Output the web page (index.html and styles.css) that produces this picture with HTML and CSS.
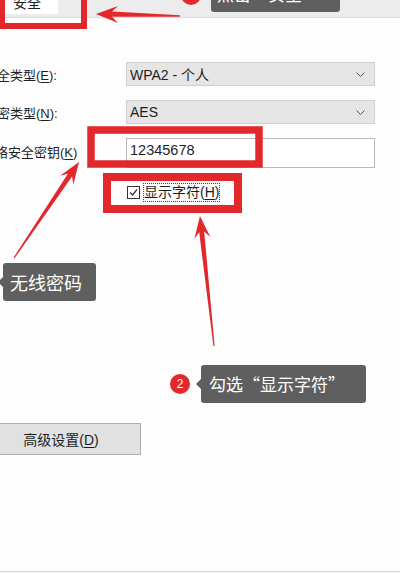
FILE: index.html
```html
<!DOCTYPE html>
<html lang="zh-CN">

<head>
    <meta charset="UTF-8">
    <meta name="viewport" content="width=device-width, initial-scale=1.0">
    <title>无线网络属性 - 安全</title>
    <link rel="stylesheet" href="styles.css">
</head>

<body>
    <div class="dialog">
        <div class="tabs">
            <div class="tab"><span>安全</span></div>
        </div>

        <div class="form">
            <label class="lbl">安全类型(<u>E</u>):</label>
            <div class="select">WPA2 - 个人
                <svg class="chev" width="9" height="5" viewBox="0 0 9 5"><polyline points="0.5,0.5 4.5,4.5 8.5,0.5" fill="none" stroke="#555" stroke-width="1"/></svg>
            </div>

            <label class="lbl">加密类型(<u>N</u>):</label>
            <div class="select">AES
                <svg class="chev" width="9" height="5" viewBox="0 0 9 5"><polyline points="0.5,0.5 4.5,4.5 8.5,0.5" fill="none" stroke="#555" stroke-width="1"/></svg>
            </div>

            <label class="lbl lbl-key">网络安全密钥(<u>K</u>)</label>
            <div class="input">12345678</div>
        </div>

        <div class="check-row">
            <span class="box">
                <svg width="11" height="11" viewBox="0 0 11 11"><polyline points="2,5.5 4.5,8 9,2.5" fill="none" stroke="#333" stroke-width="1.2"/></svg>
            </span>
            <span class="check-lbl">显示字符(<u>H</u>)</span>
        </div>

        <button class="btn">高级设置(<u>D</u>)</button>
    </div>

    <div class="footer"></div>

    <!-- 标注层 -->
    <svg class="marks" width="400" height="573" viewBox="0 0 400 573">
        <g fill="none" stroke="#e3282c">
            <rect x="2" y="-10" width="82" height="36" stroke-width="6"/>
            <rect x="91" y="130" width="168" height="34" stroke-width="7.5"/>
            <rect x="107" y="177" width="131" height="32" stroke-width="8"/>
        </g>
        <g fill="#e3282c">
            <polygon points="96,14 118,6 112,11.6 180,15.3 180,16.7 112,16.8 118,23"/>
            <polygon points="79,162 73.3,184.7 72.1,176.6 14.5,258.3 13.5,257.7 67.9,173.8 60.1,175.7"/>
            <polygon points="200,216 210.3,237 204.2,231.6 214.6,345.9 213.4,346.1 199.2,232.2 194.4,238.8"/>
            <circle cx="191" cy="-5" r="10"/>
        </g>
    </svg>

    <div class="tip tip-top">点击“安全”</div>
    <div class="tip tip-key">无线密码</div>
    <div class="step"><span class="num">2</span><span class="tip-show">勾选“显示字符”</span></div>
</body>

</html>
```

FILE: styles.css
```css
body {
    margin: 0;
    width: 400px;
    height: 573px;
    overflow: hidden;
    position: relative;
    background-color: #fdfdfd;
    color: #1e1e1e;
    font-family: "Liberation Sans", "Noto Sans CJK SC", sans-serif;
    font-size: 14px;
}

u {
    text-decoration: underline;
    text-underline-offset: 2px;
}

.tabs {
    height: 17px;
    background-color: #ececec;
    border-bottom: 1px solid #dcdcdc;
    overflow: hidden;
}

.tab {
    width: 58px;
    height: 18px;
    background-color: #fff;
}

.tab span {
    display: block;
    padding-left: 13px;
    line-height: 14px;
    margin-top: -4px;
}

.form {
    display: grid;
    grid-template-columns: 126px 249px;
    row-gap: 14px;
    align-items: center;
    padding-top: 44px;
}

.lbl {
    margin-left: -16px;
    margin-top: 1px;
    white-space: nowrap;
    font-size: 13px;
}

.lbl-key {
    margin-left: -18px;
    margin-top: -3px;
}

.select {
    height: 24px;
    box-sizing: border-box;
    background-color: #e5e5e5;
    border: 1px solid #cfcfcf;
    padding-left: 3px;
    display: flex;
    align-items: center;
    justify-content: space-between;
    padding-right: 9px;
    font-size: 14px;
}

.input {
    height: 30px;
    box-sizing: border-box;
    background-color: #fff;
    border: 1px solid #b9b9b9;
    padding: 3px 3px 0;
    font-size: 14.5px;
}

.check-row {
    display: flex;
    align-items: center;
    gap: 4px;
    margin-top: 16px;
    padding-left: 127px;
}

.box {
    width: 13px;
    height: 13px;
    box-sizing: border-box;
    border: 1px solid #333;
    display: flex;
    align-items: center;
    justify-content: center;
}

.check-lbl {
    outline: 1px dotted #444;
    line-height: 17px;
}

.btn {
    display: block;
    margin: 222px 0 0 -19px;
    width: 160px;
    height: 32px;
    background-color: #e1e1e1;
    border: 1px solid #adadad;
    font-family: inherit;
    font-size: 14px;
    color: #1e1e1e;
    padding: 0;
}

.footer {
    position: absolute;
    left: 0;
    right: 0;
    top: 571px;
    height: 2px;
    background-color: #f0f0f0;
    border-top: 1px solid #d8d8d8;
}

.marks {
    position: absolute;
    left: 0;
    top: 0;
}

.tip, .tip-show {
    background-color: #5f5f60;
    color: #fff;
    border-radius: 3px;
    font-family: "Noto Sans CJK SC", sans-serif;
    font-size: 17px;
    box-sizing: border-box;
}

.tip::before, .tip-show::before {
    content: "";
    position: absolute;
    left: -5px;
    top: 50%;
    margin-top: -5px;
    border-style: solid;
    border-width: 5px 5px 5px 0;
    border-color: transparent #5f5f60 transparent transparent;
}

.tip {
    position: absolute;
}

.tip-top {
    left: 211px;
    top: -24px;
    width: 129px;
    height: 36px;
    line-height: 36px;
    padding-left: 6px;
}

.tip-key {
    left: 3px;
    top: 263px;
    width: 93px;
    height: 38px;
    line-height: 38px;
    padding-left: 7px;
    font-size: 18px;
}

.step {
    position: absolute;
    left: 170px;
    top: 365px;
    display: flex;
    align-items: center;
    gap: 11px;
}

.num {
    width: 20px;
    height: 20px;
    border-radius: 50%;
    background-color: #e3282c;
    color: #fff;
    font-size: 12px;
    line-height: 20px;
    text-align: center;
}

.tip-show {
    position: relative;
    width: 165px;
    height: 38px;
    line-height: 38px;
    padding-left: 8px;
}
```
